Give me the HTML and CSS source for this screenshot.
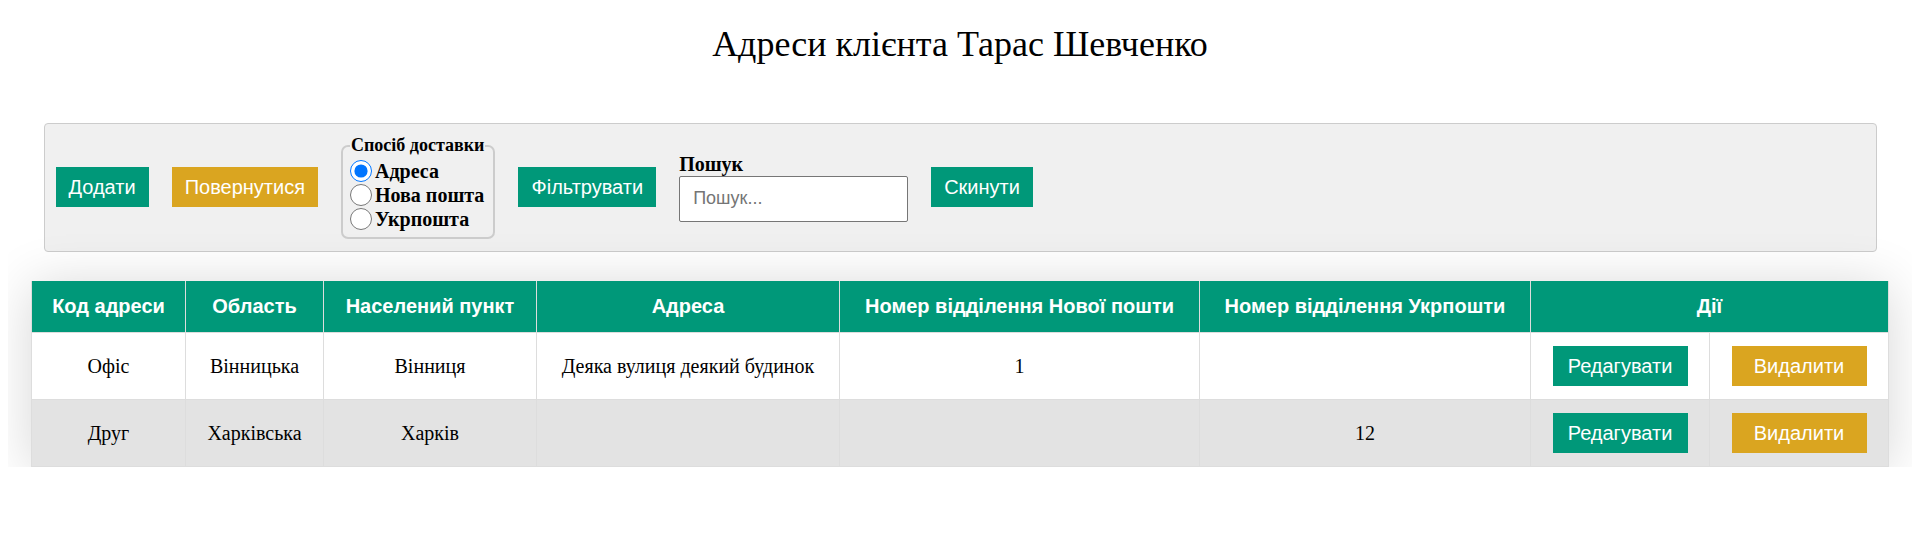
FILE: index.html
```html
<!DOCTYPE html>
<html lang="uk">
<head>
<meta charset="utf-8">
<title>Адреси клієнта</title>
<link rel="stylesheet" href="styles.css">
</head>
<body>
<h1 class="title">Адреси клієнта Тарас Шевченко</h1>

<div class="toolbar">
  <button class="btn btn-green btn-add">Додати</button>
  <button class="btn btn-gold">Повернутися</button>
  <fieldset class="delivery">
    <legend class="delivery-legend">Спосіб доставки</legend>
    <label class="radio-row"><input type="radio" name="delivery" checked> Адреса</label>
    <label class="radio-row"><input type="radio" name="delivery"> Нова пошта</label>
    <label class="radio-row"><input type="radio" name="delivery"> Укрпошта</label>
  </fieldset>
  <button class="btn btn-green">Фільтрувати</button>
  <div class="search">
    <label class="search-label" for="q">Пошук</label>
    <input class="search-input" id="q" type="text" placeholder="Пошук...">
  </div>
  <button class="btn btn-green">Скинути</button>
</div>

<table class="addr-table">
  <colgroup>
    <col class="col-code">
    <col class="col-region">
    <col class="col-city">
    <col class="col-addr">
    <col class="col-np">
    <col class="col-up">
    <col class="col-act">
    <col class="col-act">
  </colgroup>
  <thead>
    <tr>
      <th>Код адреси</th>
      <th>Область</th>
      <th>Населений пункт</th>
      <th>Адреса</th>
      <th>Номер відділення Нової пошти</th>
      <th>Номер відділення Укрпошти</th>
      <th colspan="2">Дії</th>
    </tr>
  </thead>
  <tbody>
    <tr>
      <td>Офіс</td>
      <td>Вінницька</td>
      <td>Вінниця</td>
      <td>Деяка вулиця деякий будинок</td>
      <td>1</td>
      <td></td>
      <td><button class="btn btn-green btn-act">Редагувати</button></td>
      <td><button class="btn btn-gold btn-act">Видалити</button></td>
    </tr>
    <tr class="row-alt">
      <td>Друг</td>
      <td>Харківська</td>
      <td>Харків</td>
      <td></td>
      <td></td>
      <td>12</td>
      <td><button class="btn btn-green btn-act">Редагувати</button></td>
      <td><button class="btn btn-gold btn-act">Видалити</button></td>
    </tr>
  </tbody>
</table>
</body>
</html>
```

FILE: styles.css
```css
body {
  margin: 8px;
  font-family: "Liberation Serif", "Times New Roman", serif;
  color: #000;
  background: #fff;
}

.title {
  font-size: 36px;
  font-weight: normal;
  text-align: center;
  margin: 15px 0 0;
}

.toolbar {
  display: flex;
  align-items: center;
  gap: 23px;
  width: 1833px;
  box-sizing: border-box;
  margin: 58px auto 0;
  padding: 11px 11px 12px;
  background: #f0f0f0;
  border: 1px solid #cccccc;
  border-radius: 4px;
}

.btn {
  font-family: "Liberation Sans", Arial, sans-serif;
  font-size: 20px;
  color: #fff;
  border: none;
  border-radius: 0;
  height: 40px;
  padding: 0 13px;
  cursor: pointer;
}

.btn-green { background: #009879; }
.btn-gold { background: #daa520; }

.delivery {
  margin: 0;
  padding: 3px 8px 6px 7px;
  border: 2px solid #cccccc;
  border-radius: 7px;
}

.delivery-legend {
  font-size: 18px;
  font-weight: bold;
  padding: 0 1px;
}

.radio-row {
  display: flex;
  align-items: center;
  gap: 3px;
  height: 24px;
  font-size: 20px;
  font-weight: bold;
}

.radio-row input {
  width: 22px;
  height: 22px;
  margin: 0;
}

.search {
  display: flex;
  flex-direction: column;
}

.search-label {
  font-size: 20px;
  font-weight: bold;
  line-height: 23px;
}

.search-input {
  width: 229px;
  height: 46px;
  box-sizing: border-box;
  padding: 0 13px;
  font-family: "Liberation Sans", Arial, sans-serif;
  font-size: 18px;
  border: 1px solid #767676;
  border-radius: 2px;
  background: #fff;
}

.search-input::placeholder { color: #757575; }

.addr-table {
  width: 1857px;
  margin: 29px auto 0;
  border-collapse: collapse;
  table-layout: fixed;
  box-shadow: 0 4px 50px rgba(0, 0, 0, 0.16);
}

.col-code { width: 154px; }
.col-region { width: 138px; }
.col-city { width: 213px; }
.col-addr { width: 303px; }
.col-np { width: 360px; }
.col-up { width: 331px; }
.col-act { width: 179px; }

.addr-table th {
  background: #009879;
  color: #fff;
  font-family: "Liberation Sans", Arial, sans-serif;
  font-size: 20px;
  font-weight: bold;
  height: 51px;
  padding: 0 10px;
  border: 1px solid #dddddd;
  border-top: none;
}

.addr-table td {
  text-align: center;
  font-size: 20px;
  height: 66px;
  padding: 0 10px;
  border: 1px solid #dddddd;
  background: #fff;
}

.addr-table .row-alt td { background: #e3e3e3; }

.btn-act {
  width: 135px;
  vertical-align: middle;
}
```
